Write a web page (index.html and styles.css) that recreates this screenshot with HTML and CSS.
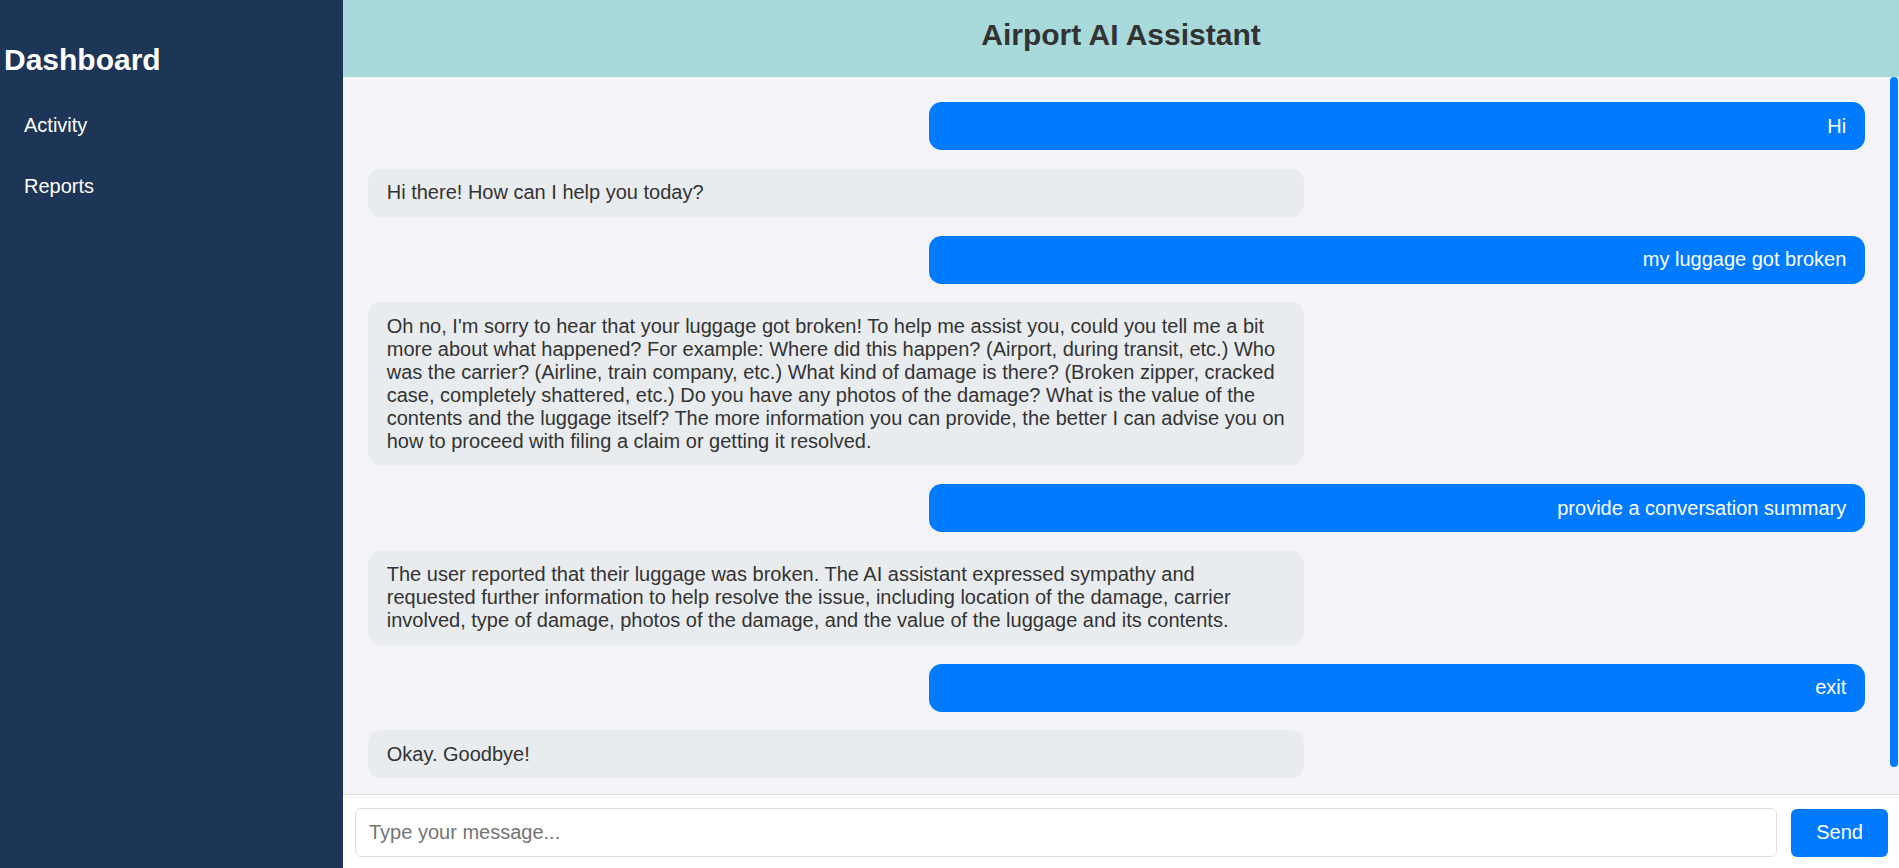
FILE: index.html
```html
<!DOCTYPE html>
<html lang="en">
<head>
<meta charset="utf-8">
<title>Airport AI Assistant</title>
<link rel="stylesheet" href="styles.css">
</head>
<body>
<div class="app">
  <aside class="sidebar">
    <h2 class="brand">Dashboard</h2>
    <nav class="nav">
      <a class="nav-link" href="#">Activity</a>
      <a class="nav-link" href="#">Reports</a>
    </nav>
  </aside>
  <main class="main">
    <header class="header">
      <h1 class="title">Airport AI Assistant</h1>
    </header>
    <div class="chat-body">
      <section class="messages">
        <div class="msg user">Hi</div>
        <div class="msg bot">Hi there! How can I help you today?</div>
        <div class="msg user">my luggage got broken</div>
        <div class="msg bot">Oh no, I'm sorry to hear that your luggage got broken! To help me assist you, could you tell me a bit more about what happened? For example: Where did this happen? (Airport, during transit, etc.) Who was the carrier? (Airline, train company, etc.) What kind of damage is there? (Broken zipper, cracked case, completely shattered, etc.) Do you have any photos of the damage? What is the value of the contents and the luggage itself? The more information you can provide, the better I can advise you on how to proceed with filing a claim or getting it resolved.</div>
        <div class="msg user">provide a conversation summary</div>
        <div class="msg bot">The user reported that their luggage was broken. The AI assistant expressed sympathy and requested further information to help resolve the issue, including location of the damage, carrier involved, type of damage, photos of the damage, and the value of the luggage and its contents.</div>
        <div class="msg user">exit</div>
        <div class="msg bot">Okay. Goodbye!</div>
      </section>
      <div class="scrollbar" aria-hidden="true"><div class="scrollbar-thumb"></div></div>
    </div>
    <form class="composer" onsubmit="return false;">
      <input class="composer-input" type="text" placeholder="Type your message...">
      <button class="composer-send" type="submit">Send</button>
    </form>
  </main>
</div>
</body>
</html>
```
FILE: styles.css
```css
* {
  box-sizing: border-box;
}

html, body {
  margin: 0;
  padding: 0;
  height: 100%;
}

body {
  font-family: "Liberation Sans", Arial, sans-serif;
  font-size: 20px;
  color: #333;
  overflow: hidden;
}

.app {
  display: flex;
  height: 100vh;
}

.sidebar {
  width: 343px;
  flex: 0 0 343px;
  background: #1d3557;
  color: #fff;
}

.brand {
  margin: 42.5px 0 0;
  padding-left: 4px;
  font-size: 30px;
  font-weight: bold;
  line-height: 34.5px;
}

.nav {
  display: flex;
  flex-direction: column;
  margin-top: 17.5px;
}

.nav-link {
  display: block;
  padding: 19px 24px;
  color: #fff;
  text-decoration: none;
  font-size: 20px;
  line-height: 23px;
}

.main {
  flex: 1;
  display: flex;
  flex-direction: column;
  min-width: 0;
  background: #f4f4f8;
}

.header {
  height: 77px;
  flex: 0 0 77px;
  background: #a8dadc;
  display: flex;
  align-items: flex-start;
  justify-content: center;
  padding-top: 18px;
}

.title {
  margin: 0;
  font-size: 30px;
  line-height: 34px;
  font-weight: bold;
  color: #333;
}

.chat-body {
  flex: 1;
  min-height: 0;
  display: flex;
}

.messages {
  flex: 1;
  min-width: 0;
  overflow: hidden;
  padding: 25px;
  display: flex;
  flex-direction: column;
}

.scrollbar {
  flex: 0 0 9px;
  width: 9px;
}

.scrollbar-thumb {
  width: 8px;
  height: 690px;
  background: #007bff;
  border-radius: 4px;
}

.msg {
  box-sizing: content-box;
  width: 60%;
  flex: 0 0 auto;
  padding: 12.5px 18.75px;
  margin-bottom: 18.75px;
  border-radius: 12.5px;
  line-height: 23px;
  font-size: 20px;
}

.msg.user {
  align-self: flex-end;
  background: #007bff;
  color: #fff;
  text-align: right;
}

.msg.bot {
  align-self: flex-start;
  background: #e9ecef;
  color: #333;
}

.composer {
  flex: 0 0 auto;
  display: flex;
  gap: 14px;
  align-items: center;
  margin: 0;
  padding: 13px 11px 11px 12px;
  background: #fff;
  border-top: 1px solid #ddd;
}

.composer-input {
  flex: 1;
  height: 49px;
  padding: 0 13px;
  border: 1px solid #ddd;
  border-radius: 6px;
  font-family: "Liberation Sans", Arial, sans-serif;
  font-size: 20px;
  color: #333;
  background: #fff;
  outline: none;
}

.composer-input::placeholder {
  color: #757575;
}

.composer-send {
  height: 48px;
  padding: 0 25px;
  border: none;
  border-radius: 6px;
  background: #007bff;
  color: #fff;
  font-family: "Liberation Sans", Arial, sans-serif;
  font-size: 20px;
  cursor: pointer;
}
```
